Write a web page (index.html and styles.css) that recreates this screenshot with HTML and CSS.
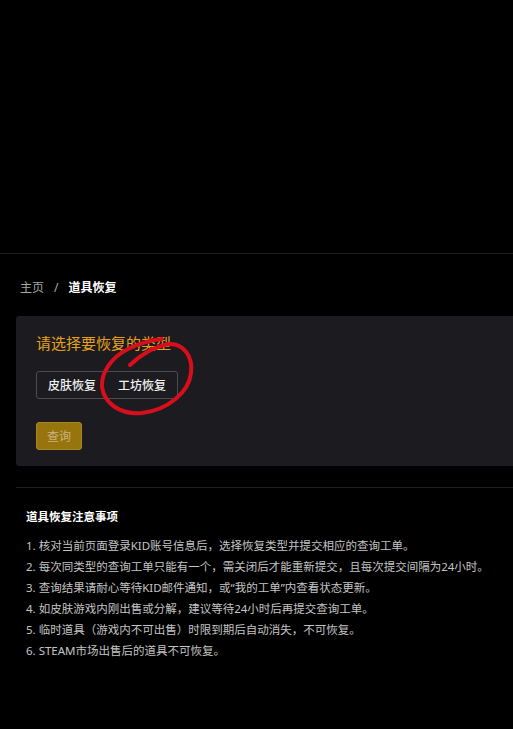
FILE: index.html
```html
<!DOCTYPE html>
<html lang="zh-CN">
<head>
  <meta charset="UTF-8" />
  <meta name="viewport" content="width=device-width, initial-scale=1" />
  <title>道具恢复</title>
  <link rel="stylesheet" href="styles.css">
</head>
<body>
  <header class="top-bar"></header>

  <main class="page">
    <nav class="crumbs">
      <span class="crumb-home">主页</span>
      <span class="crumb-sep">/</span>
      <span class="crumb-current">道具恢复</span>
    </nav>

    <section class="card">
      <h2>请选择要恢复的类型</h2>
      <div class="seg-group">
        <button type="button" class="seg">皮肤恢复</button>
        <button type="button" class="seg">工坊恢复</button>
      </div>
      <button type="button" class="query-btn" disabled>查询</button>

      <svg class="mark" width="110" height="85" viewBox="0 0 110 85">
        <path d="M34 29 C44 19, 59 10, 74 8 C89 8, 97 22, 95 37 C93 56, 72 74, 46 77 C24 79, 8 67, 6 51 C5 36, 16 21, 32 13 C44 7, 56 4, 66 3" fill="none" stroke="#d80f1a" stroke-width="4" stroke-linecap="round"/>
      </svg>
    </section>

    <section class="notes">
      <h3>道具恢复注意事项</h3>
      <ol>
        <li>1. 核对当前页面登录KID账号信息后，选择恢复类型并提交相应的查询工单。</li>
        <li>2. 每次同类型的查询工单只能有一个，需关闭后才能重新提交，且每次提交间隔为24小时。</li>
        <li>3. 查询结果请耐心等待KID邮件通知，或“我的工单”内查看状态更新。</li>
        <li>4. 如皮肤游戏内刚出售或分解，建议等待24小时后再提交查询工单。</li>
        <li>5. 临时道具（游戏内不可出售）时限到期后自动消失，不可恢复。</li>
        <li>6. STEAM市场出售后的道具不可恢复。</li>
      </ol>
    </section>
  </main>
</body>
</html>
```

FILE: styles.css
```css
* { box-sizing: border-box; }
html { overflow-x: hidden; }
body { margin: 0; background: #000; color: #ddd; font-family: "Noto Sans", "Noto Sans CJK SC", sans-serif; font-size: 12px; }
.top-bar { height: 254px; border-bottom: 1px solid #1f1f1f; }
.page { padding: 0 0 60px 16px; }
.crumbs { display: flex; gap: 9px; padding: 24px 0 0 4px; line-height: 20px; height: 62px; }
.crumb-home { color: #a8a8a8; }
.crumb-sep { color: #a8a8a8; padding: 0 1px; }
.crumb-current { color: #fff; font-weight: bold; }
.card { position: relative; margin-right: -10px; background: #1c1c20; border-radius: 3px; padding: 16px 20px 16px; }
.card h2 { margin: 0; font-size: 15px; line-height: 22px; font-weight: normal; color: #e6a21e; }
.seg-group { display: inline-flex; margin-top: 17px; border: 1px solid #4c4c50; border-radius: 3px; height: 28px; }
.seg { background: transparent; border: none; color: #f2f2f2; font-family: inherit; font-size: 12px; font-weight: 500; padding: 0 11px; height: 26px; }
.query-btn { display: block; margin-top: 23px; width: 46px; height: 28px; background: #98740f; border: 1px solid #a9871f; border-radius: 3px; color: #c9b27c; font-family: inherit; font-size: 12px; padding: 0; }
.mark { position: absolute; left: 80px; top: 20px; }
.notes { margin-top: 21px; border-top: 1px solid #1f1f1f; padding: 19px 0 0 10px; }
.notes h3 { margin: 0; font-size: 11.5px; line-height: 20px; color: #fff; font-weight: bold; }
.notes ol { list-style: none; margin: 8px 0 0; padding: 0; }
.notes li { font-size: 11.5px; line-height: 21px; color: #c4c4c4; white-space: nowrap; }
```
